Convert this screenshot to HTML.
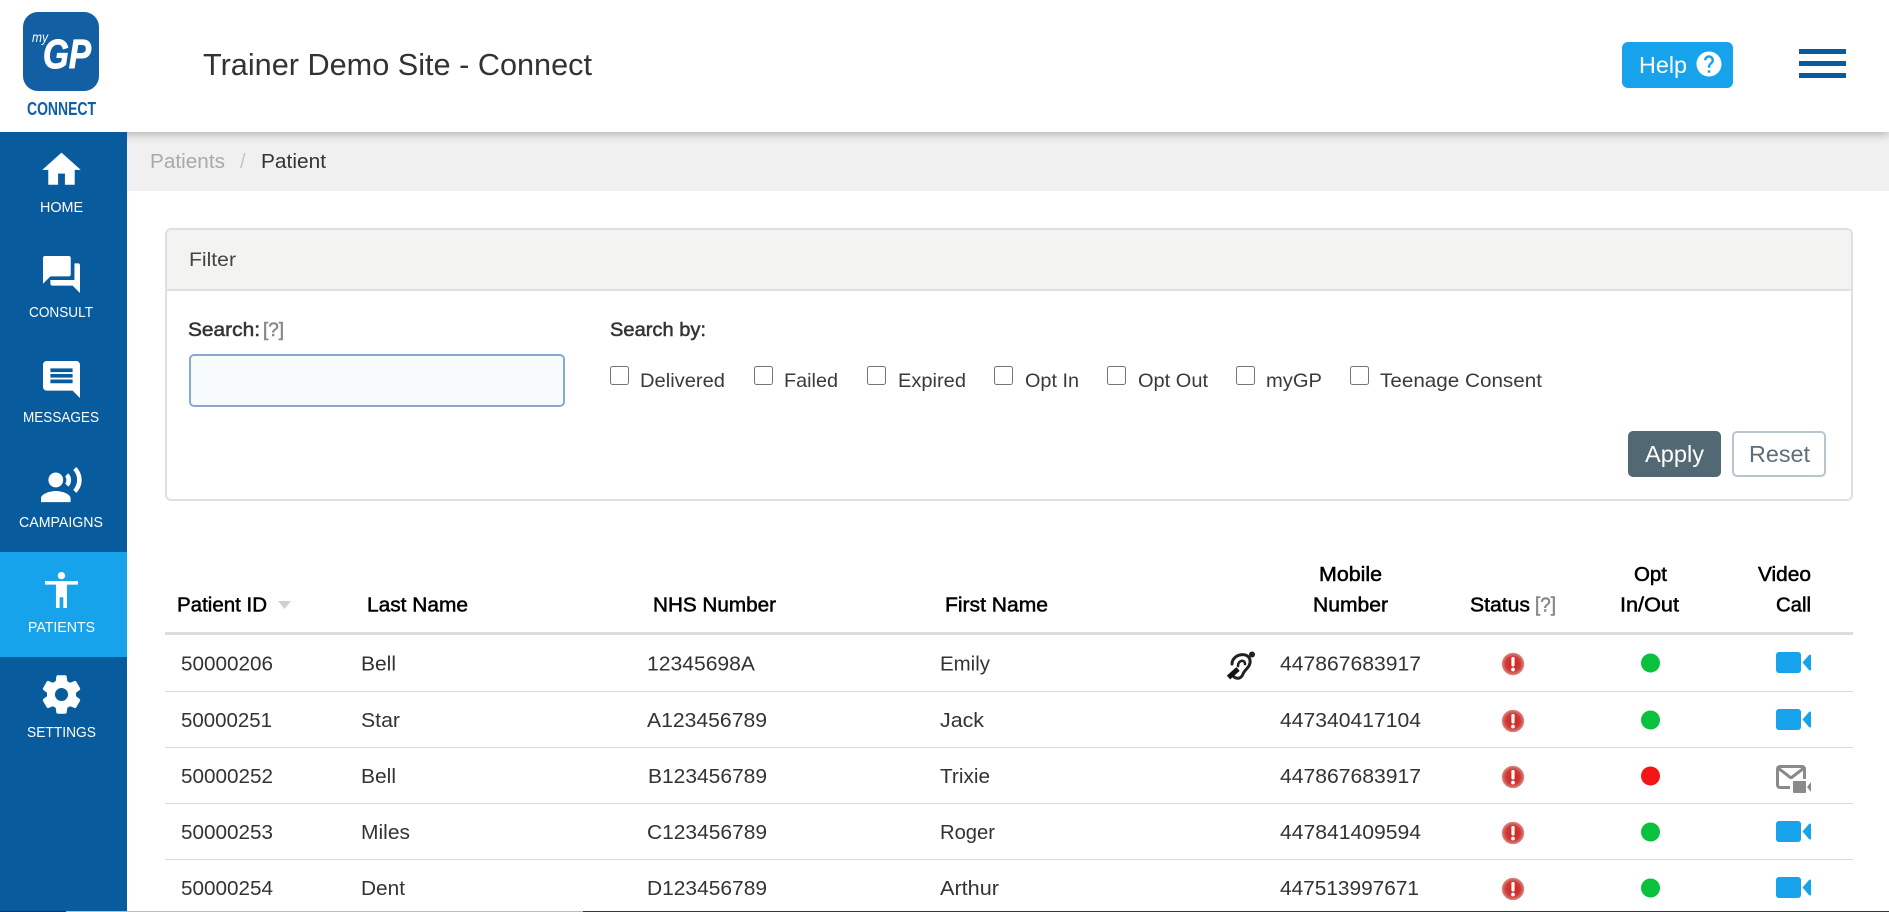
<!DOCTYPE html>
<html lang="en"><head><meta charset="utf-8"><title>Trainer Demo Site - Connect</title>
<style>
html,body{margin:0;padding:0;width:1889px;height:912px;overflow:hidden;background:#fff}
body{position:relative;font-family:"Liberation Sans",sans-serif}
.b{position:absolute;box-sizing:border-box}
#hdr{left:0;top:0;width:1889px;height:132px;background:#fff;box-shadow:0 2px 9px rgba(0,0,0,.28);z-index:1}
#side{left:0;top:132px;width:127px;height:779px;background:#085c9e;z-index:2}
#act{left:0;top:552px;width:127px;height:105px;background:#16a3ec;z-index:3}
#crumb{left:127px;top:132px;width:1762px;height:59px;background:#f0f0f0}
#card{left:165px;top:228px;width:1688px;height:273px;border:2px solid #e0e0e0;border-radius:6px;background:#fff}
#cardh{left:167px;top:230px;width:1684px;height:61px;background:#f3f3f1;border-bottom:2px solid #e0e0e0;border-radius:4px 4px 0 0}
#search{left:189px;top:354px;width:376px;height:53px;border:2px solid #85a9d0;border-radius:5px;background:#f8fbfe;margin:0;padding:0;outline:0}
.cb{position:absolute;margin:0;top:366px;width:19px;height:19px}
#apply{left:1628px;top:431px;width:93px;height:46px;background:#526873;border-radius:5px;border:0}
#reset{left:1732px;top:431px;width:94px;height:46px;background:#fff;border:2px solid #b9c5cc;border-radius:5px}
#help{left:1622px;top:42px;width:111px;height:46px;background:#16a3ec;border-radius:6px;z-index:2}
.bar{left:1799px;width:47px;height:4.5px;background:#085c9e;z-index:2}
.ln{left:165px;width:1688px;height:1px;background:#dcdcdc}
#thl{left:165px;top:632px;width:1688px;height:3px;background:#dcdcdc}
#s1{left:0;top:911px;width:66px;height:1px;background:#2a2a2a;z-index:5}
#s2{left:66px;top:911px;width:517px;height:1px;background:#bdbdbd;z-index:5}
#s3{left:583px;top:911px;width:1306px;height:1px;background:#38343a;z-index:5}
svg{position:absolute;left:0;top:0;z-index:4;pointer-events:none}
text{font-family:"Liberation Sans",sans-serif}
.r{font-size:20.5px;fill:#333}
.h{font-size:20px;fill:#000;stroke:#000;stroke-width:.5px}
.n{font-size:15px;fill:#fff}
.f{font-size:19.5px;fill:#3a3a3a}
.m{font-size:19.5px;fill:#333;stroke:#333;stroke-width:.5px}
</style></head><body>
<div class="b" id="hdr"></div>
<div class="b" id="side"></div>
<div class="b" id="act"></div>
<div class="b" id="crumb"></div>
<div class="b" id="card"></div>
<div class="b" id="cardh"></div>
<input class="b" id="search" type="text">
<input class="cb" type="checkbox" style="left:610px">
<input class="cb" type="checkbox" style="left:754px">
<input class="cb" type="checkbox" style="left:867px">
<input class="cb" type="checkbox" style="left:994px">
<input class="cb" type="checkbox" style="left:1107px">
<input class="cb" type="checkbox" style="left:1236px">
<input class="cb" type="checkbox" style="left:1350px">
<div class="b" id="apply"></div>
<div class="b" id="reset"></div>
<div class="b" id="help"></div>
<div class="b bar" style="top:49px"></div>
<div class="b bar" style="top:61px"></div>
<div class="b bar" style="top:73px"></div>
<div class="b" id="thl"></div>
<div class="b ln" style="top:691px"></div>
<div class="b ln" style="top:747px"></div>
<div class="b ln" style="top:803px"></div>
<div class="b ln" style="top:859px"></div>
<div class="b" id="s1"></div><div class="b" id="s2"></div><div class="b" id="s3"></div>

<svg width="1889" height="912" viewBox="0 0 1889 912" xmlns="http://www.w3.org/2000/svg">
<defs>
<radialGradient id="rg"><stop offset="0" stop-color="#d3221f"/><stop offset=".65" stop-color="#cf3a36"/><stop offset="1" stop-color="#d98a86"/></radialGradient>
<g id="st"><circle cx="0" cy="0" r="11.2" fill="url(#rg)"/><rect x="-1.6" y="-7" width="3.2" height="9.5" rx="1.2" fill="#fff"/><circle cx="0" cy="5.5" r="1.9" fill="#fff"/></g>
<g id="vid"><rect x="0" y="0" width="25" height="21" rx="3" fill="#16a3ec"/><path d="M26.5 10.5L33 3Q35 1.5 35 4V17Q35 19.5 33 18Z" fill="#16a3ec"/></g>
</defs>

<!-- logo -->
<rect x="23" y="12" width="76" height="79" rx="15" fill="#135fa3"/>
<text x="32" y="42" font-size="14" font-style="italic" fill="#fff" textLength="16" lengthAdjust="spacingAndGlyphs">my</text>
<text x="43" y="68" font-size="41" font-weight="700" font-style="italic" fill="#fff" stroke="#fff" stroke-width="1" textLength="48" lengthAdjust="spacingAndGlyphs">GP</text>
<text x="27" y="115" font-size="18" font-weight="700" fill="#0f5ea6" textLength="69" lengthAdjust="spacingAndGlyphs">CONNECT</text>
<text x="203" y="75" font-size="31" fill="#333" textLength="389" lengthAdjust="spacingAndGlyphs">Trainer Demo Site - Connect</text>

<!-- help -->
<text x="1639" y="73" font-size="23.5" fill="#fff" textLength="48" lengthAdjust="spacingAndGlyphs">Help</text>
<path transform="translate(1694 49) scale(1.25)" fill="#fff" d="M12 2C6.48 2 2 6.48 2 12s4.48 10 10 10 10-4.48 10-10S17.52 2 12 2zm1 17h-2v-2h2v2zm2.07-7.75l-.9.92C13.45 12.9 13 13.5 13 15h-2v-.5c0-1.1.45-2.1 1.17-2.83l1.24-1.26c.37-.36.59-.86.59-1.41 0-1.1-.9-2-2-2s-2 .9-2 2H8c0-2.21 1.79-4 4-4s4 1.79 4 4c0 .88-.36 1.68-.93 2.25z"/>

<!-- sidebar -->
<path transform="translate(39.3 147.45) scale(1.85)" fill="#fff" stroke="#fff" stroke-width=".3" d="M10 20v-6h4v6h5v-8h3L12 3 2 12h3v8z"/>
<text class="n" x="40" y="212" textLength="43" lengthAdjust="spacingAndGlyphs">HOME</text>
<path transform="translate(39.3 252.3) scale(1.85)" fill="#fff" d="M21 6h-2v9H6v2c0 .55.45 1 1 1h11l4 4V7c0-.55-.45-1-1-1zm-4 6V3c0-.55-.45-1-1-1H3c-.55 0-1 .45-1 1v14l4-4h10c.55 0 1-.45 1-1z"/>
<text class="n" x="29" y="317" textLength="64" lengthAdjust="spacingAndGlyphs">CONSULT</text>
<path transform="translate(83.7 357.3) scale(-1.85 1.85)" fill="#fff" d="M20 2H4c-1.1 0-1.99.9-1.99 2L2 22l4-4h14c1.1 0 2-.9 2-2V4c0-1.1-.9-2-2-2zm-2 12H6v-2h12v2zm0-3H6V9h12v2zm0-3H6V6h12v2z"/>
<text class="n" x="23" y="422" textLength="76" lengthAdjust="spacingAndGlyphs">MESSAGES</text>
<path transform="translate(39.15 463.3) scale(1.85)" fill="#fff" d="M9 13c2.21 0 4-1.79 4-4s-1.79-4-4-4-4 1.79-4 4 1.79 4 4 4zm0 2c-2.67 0-8 1.34-8 4v2h16v-2c0-2.66-5.33-4-8-4zm6.76-9.64l-1.68 1.69c.84 1.18.84 2.71 0 3.89l1.68 1.69c2.02-2.02 2.02-5.07 0-7.27zM20.07 2l-1.63 1.63c2.77 3.02 2.77 7.56 0 10.74L20.07 16c3.9-3.89 3.91-9.95 0-14z"/>
<text class="n" x="19" y="527" textLength="84" lengthAdjust="spacingAndGlyphs">CAMPAIGNS</text>
<path transform="translate(39.5 568.4) scale(1.83 1.8)" fill="#fff" d="M12 2c1.1 0 2 .9 2 2s-.9 2-2 2-2-.9-2-2 .9-2 2-2zm9 7h-6v13h-2v-6h-2v6H9V9H3V7h18v2z"/>
<text class="n" x="28" y="632" textLength="67" lengthAdjust="spacingAndGlyphs">PATIENTS</text>
<path transform="translate(38.1 671.1) scale(1.95)" fill="#fff" stroke="#fff" stroke-width=".5" d="M19.14 12.94c.04-.3.06-.61.06-.94 0-.32-.02-.64-.07-.94l2.03-1.58c.18-.14.23-.41.12-.61l-1.92-3.32c-.12-.22-.37-.29-.59-.22l-2.39.96c-.5-.38-1.03-.7-1.62-.94l-.36-2.54c-.04-.24-.24-.41-.48-.41h-3.84c-.24 0-.43.17-.47.41l-.36 2.54c-.59.24-1.13.57-1.62.94l-2.39-.96c-.22-.08-.47 0-.59.22L2.74 8.87c-.12.21-.08.47.12.61l2.03 1.58c-.05.3-.09.63-.09.94s.02.64.07.94l-2.03 1.58c-.18.14-.23.41-.12.61l1.92 3.32c.12.22.37.29.59.22l2.39-.96c.5.38 1.03.7 1.62.94l.36 2.54c.05.24.24.41.48.41h3.84c.24 0 .44-.17.47-.41l.36-2.54c.59-.24 1.13-.56 1.62-.94l2.39.96c.22.08.47 0 .59-.22l1.92-3.32c.12-.22.07-.47-.12-.61l-2.01-1.58zM12 15.6c-1.98 0-3.6-1.62-3.6-3.6s1.62-3.6 3.6-3.6 3.6 1.62 3.6 3.6-1.62 3.6-3.6 3.6z"/>
<text class="n" x="27" y="737" textLength="69" lengthAdjust="spacingAndGlyphs">SETTINGS</text>

<!-- breadcrumb -->
<text x="150" y="168" font-size="20" fill="#a9a9a9" textLength="75" lengthAdjust="spacingAndGlyphs">Patients</text>
<text x="240" y="168" font-size="20" fill="#c4c4c4">/</text>
<text x="261" y="168" font-size="20" fill="#333" textLength="65" lengthAdjust="spacingAndGlyphs">Patient</text>

<!-- filter -->
<text x="189" y="266" font-size="19" fill="#444" textLength="47" lengthAdjust="spacingAndGlyphs">Filter</text>
<text class="m" x="188" y="336" textLength="72" lengthAdjust="spacingAndGlyphs">Search:</text>
<text x="263" y="336" font-size="19.5" fill="#888" stroke="#888" stroke-width=".5" textLength="21" lengthAdjust="spacingAndGlyphs">[?]</text>
<text class="m" x="610" y="336" textLength="96" lengthAdjust="spacingAndGlyphs">Search by:</text>
<text class="f" x="640" y="387" textLength="85" lengthAdjust="spacingAndGlyphs">Delivered</text>
<text class="f" x="784" y="387" textLength="54" lengthAdjust="spacingAndGlyphs">Failed</text>
<text class="f" x="898" y="387" textLength="68" lengthAdjust="spacingAndGlyphs">Expired</text>
<text class="f" x="1025" y="387" textLength="54" lengthAdjust="spacingAndGlyphs">Opt In</text>
<text class="f" x="1138" y="387" textLength="70" lengthAdjust="spacingAndGlyphs">Opt Out</text>
<text class="f" x="1266" y="387" textLength="56" lengthAdjust="spacingAndGlyphs">myGP</text>
<text class="f" x="1380" y="387" textLength="162" lengthAdjust="spacingAndGlyphs">Teenage Consent</text>
<text x="1645" y="462" font-size="23" fill="#fff" textLength="59" lengthAdjust="spacingAndGlyphs">Apply</text>
<text x="1749" y="462" font-size="23" fill="#5a6f7b" textLength="61" lengthAdjust="spacingAndGlyphs">Reset</text>

<!-- table head -->
<text class="h" x="177" y="611.5" textLength="90" lengthAdjust="spacingAndGlyphs">Patient ID</text>
<path d="M278 601H291L284.5 609Z" fill="#d0d0d0"/>
<text class="h" x="367" y="611.5" textLength="101" lengthAdjust="spacingAndGlyphs">Last Name</text>
<text class="h" x="653" y="611.5" textLength="123" lengthAdjust="spacingAndGlyphs">NHS Number</text>
<text class="h" x="945" y="611.5" textLength="103" lengthAdjust="spacingAndGlyphs">First Name</text>
<text class="h" x="1319" y="581" textLength="63" lengthAdjust="spacingAndGlyphs">Mobile</text>
<text class="h" x="1313" y="611.5" textLength="75" lengthAdjust="spacingAndGlyphs">Number</text>
<text class="h" x="1470" y="611.5" textLength="60" lengthAdjust="spacingAndGlyphs">Status</text>
<text x="1535" y="611.5" font-size="20" fill="#888" stroke="#888" stroke-width=".5" textLength="21" lengthAdjust="spacingAndGlyphs">[?]</text>
<text class="h" x="1634" y="581" textLength="33" lengthAdjust="spacingAndGlyphs">Opt</text>
<text class="h" x="1620" y="611.5" textLength="59" lengthAdjust="spacingAndGlyphs">In/Out</text>
<text class="h" x="1758" y="581" textLength="53" lengthAdjust="spacingAndGlyphs">Video</text>
<text class="h" x="1776" y="611.5" textLength="35" lengthAdjust="spacingAndGlyphs">Call</text>

<!-- row 1 -->
<text class="r" x="181" y="670.5" textLength="92" lengthAdjust="spacingAndGlyphs">50000206</text>
<text class="r" x="361" y="670.5" textLength="35" lengthAdjust="spacingAndGlyphs">Bell</text>
<text class="r" x="647" y="670.5" textLength="108" lengthAdjust="spacingAndGlyphs">12345698A</text>
<text class="r" x="940" y="670.5" textLength="50" lengthAdjust="spacingAndGlyphs">Emily</text>
<text class="r" x="1280" y="670.5" textLength="141" lengthAdjust="spacingAndGlyphs">447867683917</text>
<g fill="none" stroke="#222" stroke-linecap="round">
<path d="M1232 664C1232 654 1248 651 1250 660C1251 667 1245 669 1243 674C1241 679 1237 679 1234 677" stroke-width="3"/>
<path d="M1238 666C1238 660 1245 659 1245 664" stroke-width="2.6"/>
<path d="M1228.5 677.5L1238 669" stroke-width="5" stroke="#111" stroke-linecap="butt"/>
</g>
<circle cx="1252" cy="654.5" r="3" fill="#222"/>
<use href="#st" x="1513" y="664"/>
<circle cx="1650.5" cy="663" r="9.5" fill="#09c13d"/>
<use href="#vid" x="1776" y="652"/>

<!-- row 2 -->
<text class="r" x="181" y="727" textLength="91" lengthAdjust="spacingAndGlyphs">50000251</text>
<text class="r" x="361" y="727" textLength="39" lengthAdjust="spacingAndGlyphs">Star</text>
<text class="r" x="647" y="727" textLength="120" lengthAdjust="spacingAndGlyphs">A123456789</text>
<text class="r" x="940" y="727" textLength="44" lengthAdjust="spacingAndGlyphs">Jack</text>
<text class="r" x="1280" y="727" textLength="141" lengthAdjust="spacingAndGlyphs">447340417104</text>
<use href="#st" x="1513" y="721"/>
<circle cx="1650.5" cy="720" r="9.5" fill="#09c13d"/>
<use href="#vid" x="1776" y="709"/>

<!-- row 3 -->
<text class="r" x="181" y="783" textLength="92" lengthAdjust="spacingAndGlyphs">50000252</text>
<text class="r" x="361" y="783" textLength="35" lengthAdjust="spacingAndGlyphs">Bell</text>
<text class="r" x="648" y="783" textLength="119" lengthAdjust="spacingAndGlyphs">B123456789</text>
<text class="r" x="940" y="783" textLength="50" lengthAdjust="spacingAndGlyphs">Trixie</text>
<text class="r" x="1280" y="783" textLength="141" lengthAdjust="spacingAndGlyphs">447867683917</text>
<use href="#st" x="1513" y="777"/>
<circle cx="1650.5" cy="776" r="9.5" fill="#f31414"/>
<rect x="1777.5" y="766.5" width="27" height="21" rx="2.5" fill="none" stroke="#8a8a8a" stroke-width="3"/>
<path d="M1778 768L1791 778L1804 768" fill="none" stroke="#8a8a8a" stroke-width="3"/>
<rect x="1790" y="779" width="22" height="15" fill="#fff"/>
<rect x="1793" y="781" width="13" height="12" rx="1" fill="#8a8a8a"/>
<path d="M1807 787L1811 782V792Z" fill="#8a8a8a"/>

<!-- row 4 -->
<text class="r" x="181" y="839" textLength="92" lengthAdjust="spacingAndGlyphs">50000253</text>
<text class="r" x="361" y="839" textLength="49" lengthAdjust="spacingAndGlyphs">Miles</text>
<text class="r" x="647" y="839" textLength="120" lengthAdjust="spacingAndGlyphs">C123456789</text>
<text class="r" x="940" y="839" textLength="55" lengthAdjust="spacingAndGlyphs">Roger</text>
<text class="r" x="1280" y="839" textLength="141" lengthAdjust="spacingAndGlyphs">447841409594</text>
<use href="#st" x="1513" y="833"/>
<circle cx="1650.5" cy="832" r="9.5" fill="#09c13d"/>
<use href="#vid" x="1776" y="821"/>

<!-- row 5 -->
<text class="r" x="181" y="895" textLength="92" lengthAdjust="spacingAndGlyphs">50000254</text>
<text class="r" x="361" y="895" textLength="44" lengthAdjust="spacingAndGlyphs">Dent</text>
<text class="r" x="647" y="895" textLength="120" lengthAdjust="spacingAndGlyphs">D123456789</text>
<text class="r" x="940" y="895" textLength="59" lengthAdjust="spacingAndGlyphs">Arthur</text>
<text class="r" x="1280" y="895" textLength="139" lengthAdjust="spacingAndGlyphs">447513997671</text>
<use href="#st" x="1513" y="889"/>
<circle cx="1650.5" cy="888" r="9.5" fill="#09c13d"/>
<use href="#vid" x="1776" y="877"/>
</svg>
</body></html>
